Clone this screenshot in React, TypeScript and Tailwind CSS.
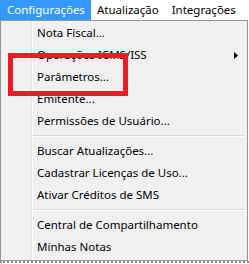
const items: (string | null)[] = [
  "Nota Fiscal...",
  "Operações ICMS/ISS",
  "Parâmetros...",
  "Emitente...",
  "Permissões de Usuário...",
  null,
  "Buscar Atualizações...",
  "Cadastrar Licenças de Uso...",
  "Ativar Créditos de SMS",
  null,
  "Central de Compartilhamento",
  "Minhas Notas",
];

export default function App() {
  return (
    <div className="relative w-[249px] h-[264px] bg-white overflow-hidden text-[11.5px] text-black font-['Noto_Sans',sans-serif]">
      {/* menu bar */}
      <div className="flex h-[20px] items-center bg-white">
        <div className="h-full flex items-center pl-[7px] pr-[6px] bg-[#3399ff] text-white">Configurações</div>
        <div className="h-full flex items-center pl-[6px] pr-[7px]">Atualização</div>
        <div className="h-full flex items-center px-[6px]">Integrações</div>
      </div>

      {/* dropdown */}
      <div className="relative w-[248px] h-[241px] border border-[#979797] bg-[#f0f0f0] py-[1px]">
        <div className="absolute left-[30px] top-0 bottom-0 w-[2px] border-l border-[#e2e3e3] border-r border-r-white" />
        {items.map((it, i) =>
          it === null ? (
            <div key={i} className="h-[8px] flex items-center pl-[32px] pr-[2px]">
              <div className="w-full h-[2px] border-t border-[#d7d7d7] border-b border-b-white" />
            </div>
          ) : (
            <div key={i} className="relative h-[22px] flex items-center pl-[36px]">
              {it}
              {it === "Operações ICMS/ISS" && (
                <svg className="absolute left-[233px] top-[8px]" width="4" height="7" viewBox="0 0 4 7">
                  <path d="M0 0 L4 3.5 L0 7 Z" fill="#000" />
                </svg>
              )}
            </div>
          )
        )}
      </div>
      <div className="h-[3px] w-[249px] border-t-2 border-dotted border-[#8a8a8a]" />

      {/* red annotation */}
      <div className="absolute left-[8px] top-[53px] w-[120px] h-[43px] border-[5px] border-[#ed1c24]" />
    </div>
  );
}
